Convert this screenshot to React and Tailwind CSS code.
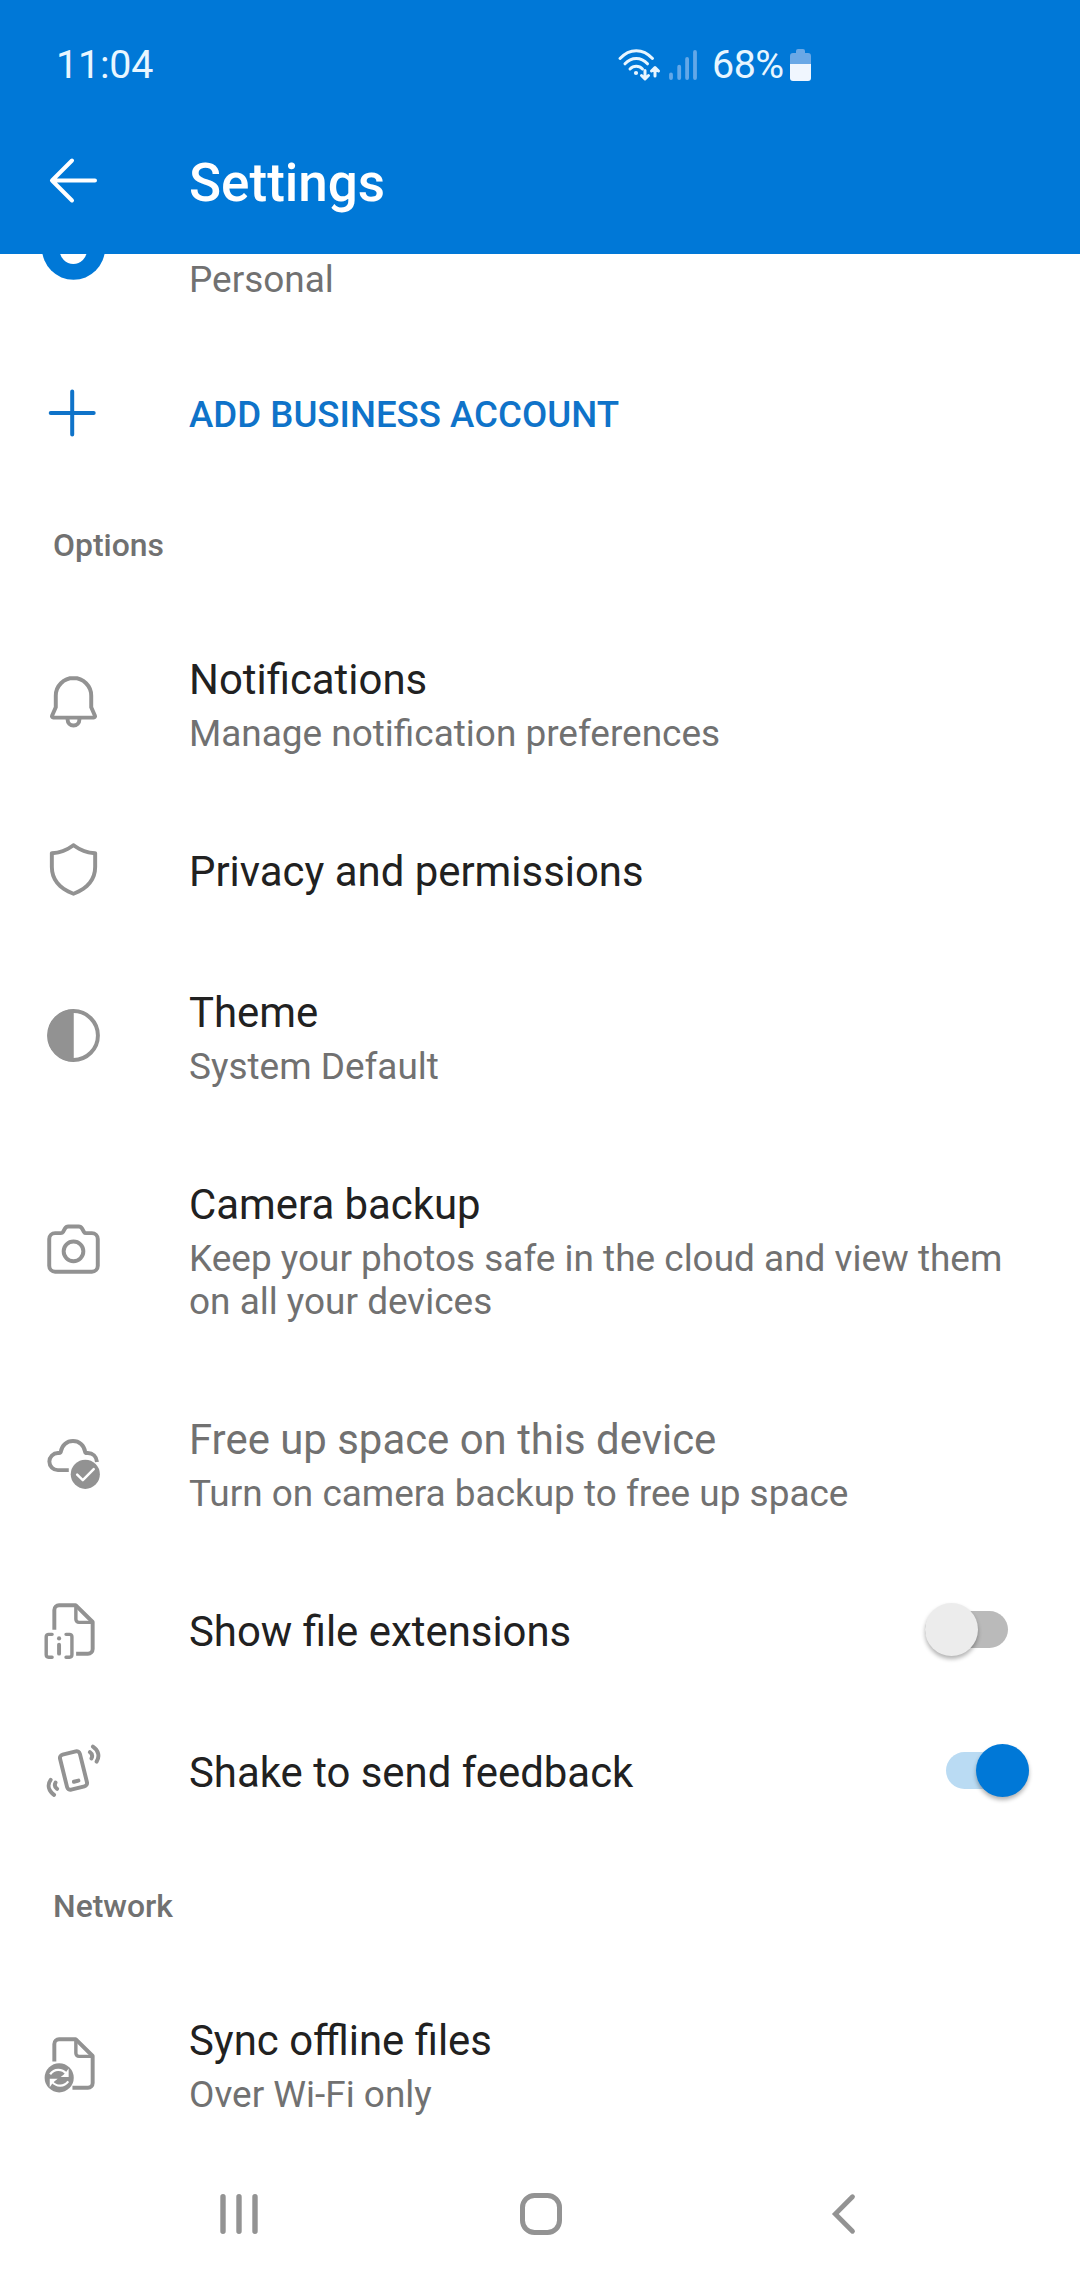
import React, { useState } from 'react';

const BellIcon = () => (
  <>
    <path d="M12 2.7c-3.75 0-6.75 3-6.75 6.7v4.4l-1.42 3.25a.5.5 0 0 0 .46.7h15.42a.5.5 0 0 0 .46-.7l-1.42-3.25V9.4c0-3.7-3-6.7-6.75-6.7Z" />
    <path d="M9.75 18.1v.4a2.25 2.25 0 0 0 4.5 0v-.4" />
  </>
);

const ShieldIcon = () => (
  <path fill="currentColor" stroke="none" fillRule="evenodd" d="M3 5.75c0-.41.34-.75.75-.75 2.66 0 5.26-.94 7.8-2.85.27-.2.63-.2.9 0C14.99 4.05 17.59 5 20.25 5c.41 0 .75.34.75.75V11c0 5-2.96 8.68-8.73 10.95a.75.75 0 0 1-.54 0C5.96 19.68 3 16 3 11V5.75Zm1.5.73V11c0 4.26 2.45 7.38 7.5 9.44 5.05-2.06 7.5-5.18 7.5-9.44V6.48c-2.61-.19-5.11-1.14-7.5-2.86-2.39 1.72-4.89 2.67-7.5 2.86Z" />
);

const ThemeIcon = () => (
  <>
    <circle cx="12" cy="12" r="9.3" />
    <path fill="currentColor" stroke="none" d="M12.1 2v20a10 10 0 0 1 0-20Z" />
  </>
);

const CameraIcon = () => (
  <>
    <path d="M5 5.75h2.2c.35 0 .62-.15.8-.45l.75-1.3c.28-.5.7-.75 1.25-.75h4c.55 0 .97.25 1.25.75l.75 1.3c.18.3.45.45.8.45H19a2.25 2.25 0 0 1 2.25 2.25v10.2A2.25 2.25 0 0 1 19 20.45H5a2.25 2.25 0 0 1-2.25-2.25V8A2.25 2.25 0 0 1 5 5.75Z" />
    <circle cx="12" cy="12.7" r="3.75" />
  </>
);

const CloudCheckIcon = () => (
  <>
    <path strokeLinecap="butt" d="M10.2 14.9H6.05a3.25 3.25 0 0 1 0-6.5h.4c.42 0 .72-.25.77-.65C7.55 5.5 9.4 3.8 11.8 3.8s4.25 1.7 4.58 3.95c.05.4.35.65.77.65h.3c1.85 0 3.3 1.35 3.5 3.4" />
    <circle cx="16.5" cy="16.5" r="5.55" fill="currentColor" stroke="none" />
    <path stroke="#fff" strokeWidth="0.95" d="m13.4 16.6 2.15 2.1 4.15-4.2" />
  </>
);

const FileIcon = ({ left, bottom }) => (
  <>
    <path strokeLinecap="butt" d={`M4.7 ${left}V4.55a1.8 1.8 0 0 1 1.8-1.8h6.3l6.5 6.4v10.3a1.8 1.8 0 0 1-1.8 1.8H${bottom}`} />
    <path strokeWidth="1.3" d="M12.9 3.2v4.9a1.2 1.2 0 0 0 1.2 1.2h4.9" />
  </>
);

const ExtensionsIcon = () => (
  <>
    <FileIcon left={12.1} bottom={13} />
    <g strokeWidth="1.3">
      <path d="M3.85 13.85H2.5a.9.9 0 0 0-.9.9v6.9a.9.9 0 0 0 .9.9h1.35M9.15 13.85h1.35a.9.9 0 0 1 .9.9v6.9a.9.9 0 0 1-.9.9H9.15" />
      <path strokeWidth="1.5" d="M6.5 17.8v3.4" />
    </g>
    <circle cx="6.5" cy="15.4" r="0.8" fill="currentColor" stroke="none" />
  </>
);

const ShakeIcon = () => (
  <>
    <g transform="rotate(-14 12 12)">
      <rect x="8.1" y="5.15" width="7.8" height="13.7" rx="1.3" />
      <path d="M11.1 16.2h1.8" />
    </g>
    <path d="M18.25 5c.85.6 1.05 1.5.6 2.4M19.4 2.9c2.1 1.4 2.7 3.7 1.4 5.7M5.75 19c-.85-.6-1.05-1.5-.6-2.4M4.6 21.3c-2.1-1.6-2.7-3.8-1.3-5.7" />
  </>
);

const SyncFileIcon = () => (
  <>
    <FileIcon left={11.2} bottom={11.6} />
    <circle cx="6.55" cy="17.45" r="5.55" fill="currentColor" stroke="none" />
    <g stroke="#fff" strokeWidth="0.85" strokeLinecap="butt">
      <path d="M3.1 16.1c1.6-2.1 4.4-2.2 6.2-.2M10 18.8c-1.6 2.1-4.4 2.2-6.2.2" />
      <path fill="#fff" stroke="none" d="M10.15 13.9v3.2H7.1l1.1-.85.9-.9ZM2.95 21v-3.2H6l-1.1.85-.9.9Z" />
    </g>
  </>
);

const OPTIONS = [
  { icon: BellIcon, title: 'Notifications', sub: 'Manage notification preferences' },
  { icon: ShieldIcon, title: 'Privacy and permissions' },
  { icon: ThemeIcon, title: 'Theme', sub: 'System Default' },
  { icon: CameraIcon, title: 'Camera backup', sub: 'Keep your photos safe in the cloud and view them on all your devices' },
  { icon: CloudCheckIcon, title: 'Free up space on this device', sub: 'Turn on camera backup to free up space', disabled: true },
];

function Row({ icon: Icon, title, sub, disabled, children }) {
  return (
    <div className="flex items-center py-[46px] pl-[42px]">
      <svg viewBox="0 0 24 24" className="w-[63px] h-[63px] -mt-[10px] -mb-[5px] shrink-0 text-[#929292]" fill="none" stroke="currentColor" strokeWidth="1.5" strokeLinecap="round" strokeLinejoin="round">
        <Icon />
      </svg>
      <div className="ml-[84px] w-[830px]">
        <div className={disabled ? 'text-[41.9px] leading-[49px] text-[#717171]' : 'text-[41.9px] leading-[49px] text-[#212121]'}>{title}</div>
        {sub && <div className="mt-2 text-[36.95px] leading-[43px] text-[#717171]">{sub}</div>}
      </div>
      {children}
    </div>
  );
}

function Toggle({ on, onClick }) {
  return (
    <button
      onClick={onClick}
      className={on ? 'absolute right-[51px] w-[83px] mb-1 flex items-center justify-end' : 'absolute right-[72px] w-[83px] mb-1 flex items-center'}
    >
      <span className={on ? 'w-full h-[37px] rounded-full bg-[#badbf3]' : 'w-full h-[37px] rounded-full bg-[#bababa]'} />
      <span className={on ? 'absolute right-0 w-[53px] h-[53px] rounded-full bg-[#0078d7] shadow-[0_3px_4px_rgba(0,0,0,0.3)]' : 'absolute left-0 w-[53px] h-[53px] rounded-full bg-[#ececec] shadow-[0_3px_4px_rgba(0,0,0,0.3)]'} />
    </button>
  );
}

const SectionTitle = ({ children }) => (
  <h2 className="h-[127px] pt-[45px] pl-[53px] text-[31.9px] leading-[37px] font-medium text-[#717171]">{children}</h2>
);

function StatusBar() {
  return (
    <div className="flex h-[106px] pt-[42px] pl-[56px] text-[39.4px] leading-[46px] text-[#e8f6ff]">
      <span className="w-[560px] tracking-[-0.2px]">11:04</span>
      <svg viewBox="616 44 86 42" className="w-[86px] h-[42px] mt-0.5" fill="none" stroke="currentColor" strokeWidth="3" strokeLinecap="round" strokeLinejoin="round">
        <path d="M620 58.5c9.5-10.5 23-10.5 32.5 0M625 63.8c6.5-7 16-7 22.5 0M630 69c3.5-3.6 9-3.6 12.5 0" />
        <circle cx="636" cy="73" r="2.1" fill="currentColor" stroke="none" />
        <path d="M645 70.5v8M641.5 75.500l3.500 3.500 3.500-3.500M655 76v-8M651.500 71l3.500-3.500 3.500 3.500" />
        <path stroke="#63a8e8" strokeWidth="3.8" d="M671 74.500v3.500M679.200 66.700V78M687.100 59V78M695 52V78" />
      </svg>
      <span className="ml-[10px] w-[78px] tracking-[-0.5px]">68%</span>
      <svg viewBox="0 0 22 34" className="w-[22px] h-[34px] mt-[7px]">
        <path fill="#6aa8e6" d="M6 4V2a2 2 0 0 1 2-2h5a2 2 0 0 1 2 2v2h3a3 3 0 0 1 3 3v9H0V7a3 3 0 0 1 3-3Z" />
        <path fill="#f0f6fe" d="M0 15h21v14a3 3 0 0 1-3 3H3a3 3 0 0 1-3-3Z" />
      </svg>
    </div>
  );
}

export default function App() {
  const [showExt, setShowExt] = useState(false);
  const [shake, setShake] = useState(true);

  return (
    <div className="w-[1080px] h-[2280px] overflow-hidden bg-white font-['Roboto',sans-serif]">
      <header className="h-[254px] bg-[#0078d7] text-white">
        <StatusBar />
        <div className="flex items-center h-[148px] pl-[48px]">
          <svg viewBox="0 0 50 48" className="w-[50px] h-[48px]" fill="none" stroke="currentColor" strokeWidth="4" strokeLinecap="round" strokeLinejoin="round">
            <path d="M47 24.500H4M24 4.500l-20 20 20 20" />
          </svg>
          <h1 className="ml-[91px] mt-[5px] text-[53px] leading-[62px] font-medium">Settings</h1>
        </div>
      </header>

      <div className="flex h-[94px] pl-[42px]">
        {/* avatar scrolled under the header */}
        <svg viewBox="0 0 63 26" className="w-[63px] h-[26px]">
          <circle cx="31.500" cy="-5.700" r="31.500" fill="#0078d7" />
          <circle cx="31.300" cy="-3.500" r="13.500" fill="#fff" />
        </svg>
        <span className="ml-[84px] mt-1 text-[36.95px] leading-[43px] text-[#717171]">Personal</span>
      </div>
      <button className="flex items-center w-full h-[134px] text-[#0f73c9]">
        <svg viewBox="0 0 48 48" className="w-[48px] h-[48px] ml-[48px] mb-[5px]" fill="none" stroke="currentColor" strokeWidth="4" strokeLinecap="round">
          <path d="M24.200 2.500v43M2.700 24h43" />
        </svg>
        <span className="ml-[93px] mb-0.5 text-[36.65px] leading-[43px] font-medium">ADD BUSINESS ACCOUNT</span>
      </button>

      <SectionTitle>Options</SectionTitle>
      {OPTIONS.map(o => <Row key={o.title} {...o} />)}
      <Row icon={ExtensionsIcon} title="Show file extensions">
        <Toggle on={showExt} onClick={() => setShowExt(!showExt)} />
      </Row>
      <Row icon={ShakeIcon} title="Shake to send feedback">
        <Toggle on={shake} onClick={() => setShake(!shake)} />
      </Row>

      <SectionTitle>Network</SectionTitle>
      <Row icon={SyncFileIcon} title="Sync offline files" sub="Over Wi-Fi only" />

      <nav className="flex items-center h-[104px] pl-[219px] text-[#939393]">
        <svg viewBox="0 0 40 44" className="w-[40px] h-[44px]" stroke="currentColor" strokeWidth="5.400" strokeLinecap="round">
          <path d="M4 4.700v34.600M20 4.700v34.600M36 4.700v34.600" />
        </svg>
        <svg viewBox="0 0 44 44" className="w-[44px] h-[44px] ml-[260px]" fill="none" stroke="currentColor" strokeWidth="5">
          <rect x="3.500" y="3.500" width="37" height="37" rx="12" />
        </svg>
        <svg viewBox="0 0 28 44" className="w-[28px] h-[44px] ml-[266px]" fill="none" stroke="currentColor" strokeWidth="4.800" strokeLinecap="round">
          <path d="m23.500 4.700-17.200 17.300 17.200 17.300" />
        </svg>
      </nav>
    </div>
  );
}
